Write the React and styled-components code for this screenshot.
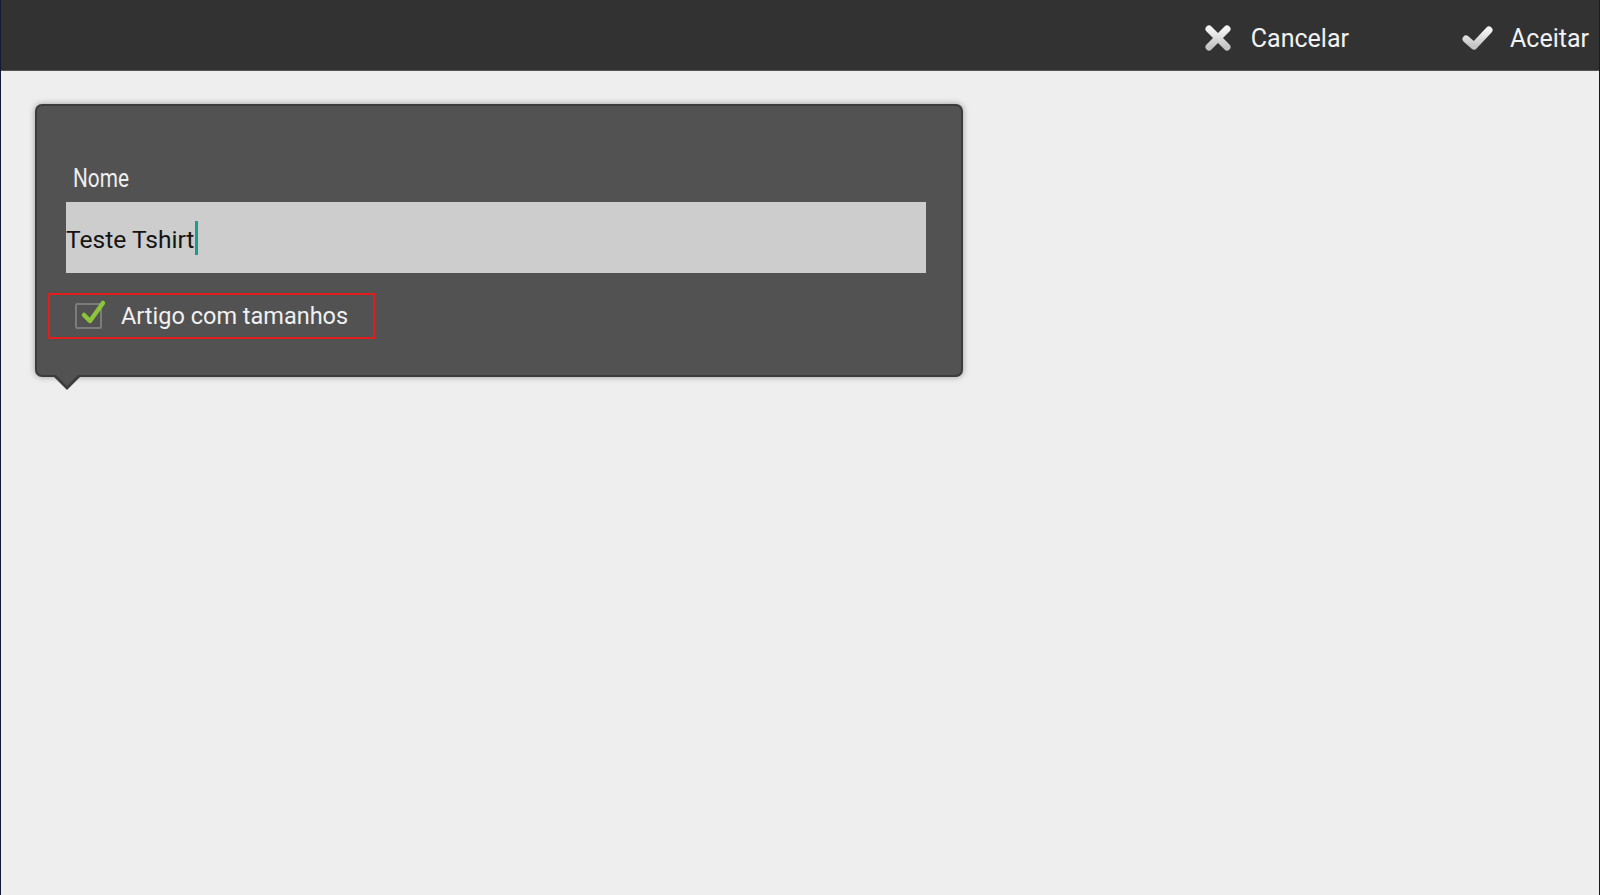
import React from 'react'
import styled, { createGlobalStyle } from 'styled-components'

const GlobalStyle = createGlobalStyle`
    html, body {
        margin: 0;
        padding: 0;
        background: #eeeeee;
    }
    body {
        font-family: Roboto, "Liberation Sans", sans-serif;
    }
`

const Screen = styled.div`
    height: 895px;
    box-sizing: border-box;
    border-left: 1px solid #141a32;
    border-right: 1px solid #141a32;
    background: #eeeeee;
    overflow: hidden;
    display: flex;
    flex-direction: column;
`

const ActionBar = styled.div`
    height: 71px;
    box-sizing: border-box;
    background: #323232;
    border-bottom: 1px solid #555555;
    display: flex;
    justify-content: flex-end;
    align-items: center;
    gap: 113px;
    padding: 6px 10px 0 0;
`

const ActionButton = styled.div`
    display: flex;
    align-items: center;
    gap: ${p => p.gap || 18}px;
    color: #f2f2f2;
    font-size: 25px;
    cursor: pointer;
    svg {
        display: block;
    }
`

const Content = styled.div`
    flex: 1;
    padding: 33px 0 0 34px;
`

const Panel = styled.div`
    position: relative;
    width: 928px;
    height: 273px;
    box-sizing: border-box;
    background: #525252;
    border: 2px solid #3c3c3c;
    border-radius: 7px;
    box-shadow: 0 0 6px rgba(0, 0, 0, 0.35);
    padding: 57px 0 0 11px;
    display: flex;
    flex-direction: column;
    align-items: flex-start;
`

// little callout tail under the panel
const Tail = styled.div`
    position: absolute;
    left: 15px;
    bottom: -15px;
    width: 0;
    height: 0;
    border-left: 15px solid transparent;
    border-right: 15px solid transparent;
    border-top: 15px solid #3c3c3c;
    &::after {
        content: '';
        position: absolute;
        left: -13px;
        top: -17px;
        border-left: 13px solid transparent;
        border-right: 13px solid transparent;
        border-top: 13px solid #525252;
    }
`

const FieldLabel = styled.span`
    display: inline-block;
    margin-left: 25px;
    font-size: 26px;
    line-height: 30px;
    color: #eeeeee;
    transform: scaleX(0.8);
    transform-origin: left center;
`

const TextInput = styled.div`
    margin: 9px 0 0 18px;
    width: 860px;
    height: 71px;
    box-sizing: border-box;
    background: #cdcdcd;
    padding-top: 4px;
    display: flex;
    align-items: center;
    font-size: 24.6px;
    color: #141414;
`

const Caret = styled.span`
    display: inline-block;
    width: 3px;
    height: 34px;
    background: #16a08a;
    margin-left: 1px;
    margin-top: -4px;
`

const CheckRow = styled.label`
    margin-top: 20px;
    width: 327px;
    height: 46px;
    box-sizing: border-box;
    border: 2px solid #e01e1e;
    display: flex;
    align-items: center;
    gap: 19px;
    padding-left: 25px;
    font-size: 23.5px;
    color: #f0f0f0;
`

const CheckBox = styled.span`
    position: relative;
    width: 27px;
    height: 26px;
    box-sizing: border-box;
    border: 2px solid #7c7c7c;
    border-radius: 2px;
    svg {
        position: absolute;
        left: 2px;
        top: -6px;
    }
`

function CrossIcon() {
    return (
        <svg width="28" height="28" viewBox="0 0 28 28">
            <defs>
                <linearGradient id="gx" x1="0" y1="0" x2="0" y2="1">
                    <stop offset="0" stopColor="#f4f4f4" />
                    <stop offset="1" stopColor="#c4c4c4" />
                </linearGradient>
            </defs>
            <g stroke="url(#gx)" strokeWidth="7" strokeLinecap="round">
                <line x1="5" y1="5" x2="23" y2="23" />
                <line x1="23" y1="5" x2="5" y2="23" />
            </g>
        </svg>
    )
}

function TickIcon() {
    return (
        <svg width="31" height="26" viewBox="0 0 31 26">
            <defs>
                <linearGradient id="gt" x1="0" y1="0" x2="0" y2="1">
                    <stop offset="0" stopColor="#f4f4f4" />
                    <stop offset="1" stopColor="#c4c4c4" />
                </linearGradient>
            </defs>
            <polyline
                points="4,14 12,21 27,5"
                fill="none"
                stroke="url(#gt)"
                strokeWidth="7"
                strokeLinecap="round"
                strokeLinejoin="round"
            />
        </svg>
    )
}

function GreenTick() {
    return (
        <svg width="28" height="26" viewBox="0 0 28 26">
            <polyline
                points="5,16 11,22 24,4"
                fill="none"
                stroke="#8cc43c"
                strokeWidth="4.5"
                strokeLinecap="round"
                strokeLinejoin="round"
            />
        </svg>
    )
}

export default function App() {
    return (
        <>
            <GlobalStyle />
            <Screen>
                <ActionBar>
                    <ActionButton gap={19}>
                        <CrossIcon />
                        <span>Cancelar</span>
                    </ActionButton>
                    <ActionButton gap={17}>
                        <TickIcon />
                        <span>Aceitar</span>
                    </ActionButton>
                </ActionBar>
                <Content>
                    <Panel>
                        <FieldLabel>Nome</FieldLabel>
                        <TextInput>
                            Teste Tshirt<Caret />
                        </TextInput>
                        <CheckRow>
                            <CheckBox>
                                <GreenTick />
                            </CheckBox>
                            Artigo com tamanhos
                        </CheckRow>
                        <Tail />
                    </Panel>
                </Content>
            </Screen>
        </>
    )
}
